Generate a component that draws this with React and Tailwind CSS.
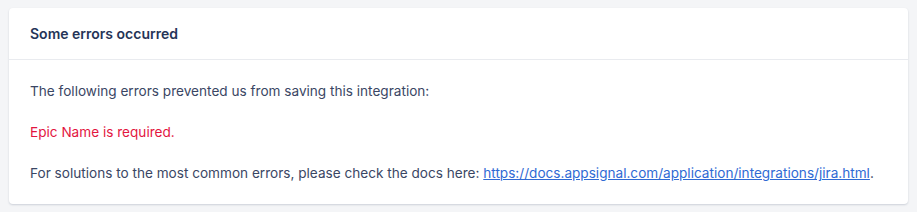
export default function App() {
  return (
    <div className="min-h-screen bg-[#f4f5f7] px-[9px] pt-[8px] font-['Inter',sans-serif] text-[13.6px]">
      <div className="rounded-[4px] bg-white shadow-[0_1px_2px_rgba(30,45,80,0.18)]">
        <div className="border-b border-[#e9ebef] px-[21px] pt-[16px] pb-[15px]">
          <h2 className="text-[14px] leading-5 font-semibold text-[#253457]">Some errors occurred</h2>
        </div>
        <div className="px-[21px] pt-[21px] pb-[21px] leading-5 text-[#3a4664]">
          <p className="mb-[21px]">The following errors prevented us from saving this integration:</p>
          <p className="mb-[21px] text-[#e3163f]">Epic Name is required.</p>
          <p>
            For solutions to the most common errors, please check the docs here:{' '}
            <a
              href="#"
              className="text-[#2f6ad4] underline"
            >
              https://docs.appsignal.com/application/integrations/jira.html
            </a>
            .
          </p>
        </div>
      </div>
    </div>
  );
}
